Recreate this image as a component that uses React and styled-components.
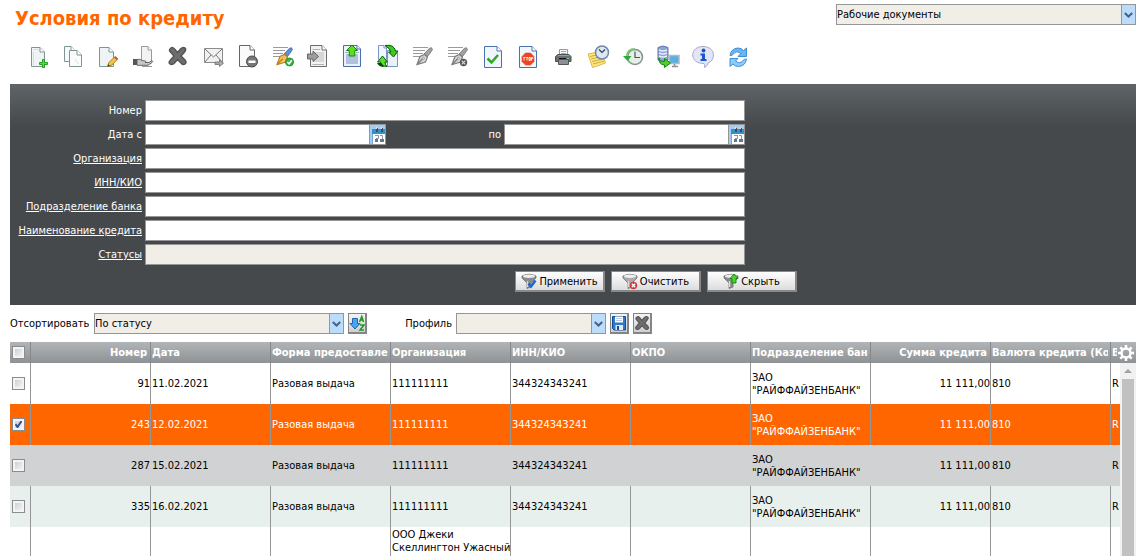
import React from "react";
import styled, { createGlobalStyle, css } from "styled-components";

const GlobalStyle = createGlobalStyle`
  * { box-sizing: border-box; }
  body {
    margin: 0;
    background: #fff;
    color: #000;
    overflow: hidden;
  }
  body, button, input, select {
    font-family: Tahoma, "DejaVu Sans Condensed", "DejaVu Sans", sans-serif;
    font-size: 11px;
    line-height: 13px;
  }
`;

const Page = styled.div`
  display: flex;
  flex-direction: column;
  height: 100vh;
  padding-left: 10px;
`;

const Header = styled.header`
  display: flex;
  justify-content: space-between;
  align-items: flex-start;
  padding: 4px 0 0 5px;
`;

const Title = styled.h1`
  margin: 0;
  color: #ff6600;
  font-size: 20px;
  line-height: 28px;
  font-weight: bold;
`;

const SelectFrame = styled.span`
  display: flex;
  width: ${(p) => p.$width};
  height: 21px;
  border: 1px solid #969696;
  background: #f1eee8;
  position: relative;
`;

const SelectInput = styled.select`
  appearance: none;
  flex: 1;
  min-width: 0;
  border: 0;
  padding: 0;
  margin: 0;
  background: transparent;
  color: #000;
  outline: none;
`;

const SelectArrow = styled.span`
  position: absolute;
  top: 0;
  right: 0;
  bottom: 0;
  width: 14px;
  display: flex;
  align-items: center;
  justify-content: center;
  border-left: 1px solid #969696;
  background: #bbdcfb;
  pointer-events: none;
`;

const Toolbar = styled.nav`
  display: flex;
  gap: 11px;
  padding: 13px 0 15px 17px;
`;

const ToolButton = styled.button`
  width: 24px;
  height: 24px;
  padding: 0;
  border: 0;
  background: none;
  svg { display: block; overflow: visible; }
`;

const FilterPanel = styled.form`
  padding: 16px 0 13px;
  background: linear-gradient(#5f6468 0, #45494c 42px);
  color: #fff;
`;

const Fields = styled.div`
  display: grid;
  grid-template-columns: 132px minmax(0, 600px);
  column-gap: 3px;
  row-gap: 3px;
  align-items: center;
`;

const labelText = css`
  color: #fff;
  justify-self: end;
  white-space: nowrap;
`;

const FieldLabel = styled.label`
  ${labelText}
`;

const FieldLink = styled.a`
  ${labelText}
  text-decoration: underline;
`;

const TextInput = styled.input`
  width: 100%;
  min-width: 0;
  height: 21px;
  padding: 0 2px;
  border: 1px solid #969696;
  border-radius: 0;
  background: ${(p) => (p.$muted ? "#f1eee8" : "#fff")};
  outline: none;
`;

const DateRange = styled.div`
  display: flex;
  align-items: center;
`;

const DateBox = styled.span`
  display: flex;
  width: 241px;
  height: 21px;
  border: 1px solid #969696;
  background: #fff;
`;

const DateInput = styled.input`
  flex: 1;
  min-width: 0;
  border: 0;
  padding: 0 2px;
  outline: none;
`;

const CalendarButton = styled.button`
  width: 16px;
  padding: 0;
  border: 0;
  border-left: 1px solid #969696;
  background: #a5cdf4;
  svg { display: block; }
`;

const RangeLabel = styled.label`
  flex: 1;
  padding-right: 3px;
  text-align: right;
`;

const FilterActions = styled.div`
  display: flex;
  gap: 6px;
  padding: 6px 0 0 505px;
`;

const ActionButton = styled.button`
  display: flex;
  align-items: center;
  justify-content: center;
  gap: 2px;
  width: 90px;
  height: 21px;
  padding: 0;
  border: 1px solid #898989;
  border-width: 1px 2px 2px 1px;
  background: linear-gradient(#fff, #dcdcdc);
  color: #000;
  white-space: nowrap;
`;

const SortBar = styled.div`
  display: flex;
  align-items: center;
  gap: 4px;
  padding: 8px 0;
`;

const BarLabel = styled.label`
  width: ${(p) => p.$width};
  text-align: ${(p) => p.$align || "left"};
  white-space: nowrap;
`;

const SmallButton = styled.button`
  width: 19px;
  height: 21px;
  padding: 0;
  border: 1px solid #858585;
  border-width: 1px 2px 2px 1px;
  background: linear-gradient(#f4f4f4, #cfcfcf);
  svg { display: block; }
`;

const GridArea = styled.div`
  position: relative;
  flex: 1;
  min-height: 0;
  overflow: hidden;
`;

const Table = styled.table`
  width: 100%;
  table-layout: fixed;
  border-collapse: separate;
  border-spacing: 0;
`;

const Col = styled.col`
  width: ${(p) => p.$width};
`;

const HeadRow = styled.tr`
  height: 21px;
  background: linear-gradient(#b1b5b8, #8e9295);
`;

const HeadCell = styled.th`
  height: 21px;
  padding: 0 ${(p) => (p.$right ? 3 : 2)}px 0 1px;
  border-right: 1px solid #85888a;
  color: #fff;
  text-align: ${(p) => (p.$right ? "right" : "left")};
  white-space: nowrap;
  &:first-child { padding-left: 2px; }
  &:last-child {
    border-right: 0;
    padding-right: 19px;
  }
`;

const Clip = styled.span`
  display: block;
  overflow: hidden;
`;

const rowStyles = {
  plain: css`background: #fff;`,
  selected: css`background: #ff6600; color: #fff;`,
  hover: css`background: #d1d2d4; --line: transparent;`,
  tinted: css`background: #e8f0ed;`,
};

const Row = styled.tr`
  --line: #969696;
  height: 41px;
  ${(p) => rowStyles[p.$kind]}
`;

const Cell = styled.td`
  padding: 1px 0 1px 1px;
  border-right: 1px solid var(--line);
  text-align: ${(p) => (p.$right ? "right" : "left")};
  vertical-align: ${(p) => (p.$top ? "top" : "middle")};
  overflow: hidden;
  white-space: pre-line;
  &:first-child { padding-left: 2px; }
  &:last-child { border-right: 0; }
`;

const Unbroken = styled.span`
  white-space: nowrap;
`;

const Check = styled.input`
  appearance: none;
  display: block;
  width: 13px;
  height: 13px;
  margin: 0;
  border: 1px solid #8a8d90;
  background: linear-gradient(135deg, #c3c8cf, #fafafa);
  box-shadow: inset 0 0 0 2px #f4f4f4;
  &:checked {
    background: url('data:image/svg+xml;utf8,<svg xmlns="http://www.w3.org/2000/svg" viewBox="0 0 11 11"><path d="M2.5 5.2L4.5 8L8.7 1.8" fill="none" stroke="%2334508f" stroke-width="2"/></svg>'),
      linear-gradient(135deg, #c3c8cf, #fafafa);
  }
`;

const GearButton = styled.button`
  position: absolute;
  top: 2px;
  right: 1px;
  width: 18px;
  height: 18px;
  padding: 0;
  border: 0;
  background: none;
  svg { display: block; }
`;

const Scrollbar = styled.div`
  position: absolute;
  top: 21px;
  right: 0;
  bottom: 0;
  width: 16px;
  display: flex;
  flex-direction: column;
  align-items: center;
  background: #f1f1f1;
`;

const ScrollUp = styled.span`
  height: 16px;
  display: flex;
  align-items: center;
`;

const ScrollThumb = styled.span`
  flex: 1;
  width: 12px;
  background: #c1c1c1;
`;

/* ---------- icons ---------- */

const Doc = ({ x, y, w, h, stroke = "#7f9494", fill = "#eef4f3", fold = 5 }) => (
  <g stroke={stroke} fill={fill}>
    <path d={`M${x + 0.5} ${y + 0.5}H${x + w - fold}L${x + w - 0.5} ${y + fold}V${y + h - 0.5}H${x + 0.5}Z`} />
    <path d={`M${x + w - fold} ${y + 0.5}V${y + fold}H${x + w - 0.5}`} fill="#fff" />
  </g>
);

const Lines = () => <path d="M1 2.5H16M1 5.5H13M1 8.5H11M1 11.5H9" stroke="#9a9a9a" />;

const Nib = ({ a, b, c, edge }) => (
  <g>
    <path d="M12 9L17.5 3.2Q19.5 2 20.5 4Q20.5 5 15.500 11.500Z" fill={c} stroke={edge} strokeWidth=".8" />
    <path d="M5 19.500L8 11.500L12.500 9.500L15.500 12L13.500 17Z" fill={a} stroke={b} strokeWidth="1.200" />
    <path d="M5.500 19L11 13.500" stroke={b} strokeWidth="1.200" />
    <circle cx="11.300" cy="13.200" r="1.100" fill="#fff" stroke={b} strokeWidth=".7" />
  </g>
);

const GreyCross = () => (
  <path
    d="M3.500 3.500Q5.500 1.500 7.500 4L10.500 7.500L13.500 4Q16 1.500 18 3Q19.500 4.500 17.500 7L14 11L18 15Q20 17.500 18 19Q16 20.500 14 18L10.500 14.500L7.500 18Q5 20.500 3 19Q1 17.500 3.500 15L7 11L3.500 7Q1.500 5 3.500 3.500Z"
    fill="#6e6e6e" stroke="#555" strokeWidth="1.500"
  />
);

const icons = {
  "Создать": (
    <>
      <Doc x={4} y={2} w={14} h={20} />
      <path d="M6.500 4.500H12M6.500 20V7" stroke="#d4dfdd" />
      <path d="M15.500 14.500H17.500V17.500H20.500V19.500H17.500V22.500H15.500V19.500H12.500V17.500H15.500Z" fill="#4fe03c" stroke="#1fa51d" />
    </>
  ),
  "Копировать": (
    <>
      <Doc x={2} y={1} w={12} h={16} fill="#f7fafa" />
      <Doc x={7} y={5} w={13} h={17} fill="#fbfdfd" />
      <path d="M13 14L16.500 19" stroke="#dde5e4" />
    </>
  ),
  "Изменить": (
    <>
      <Doc x={2} y={2} w={15} h={20} />
      <path d="M10.500 21.500L12 17.500L18 11.500L20.800 14L14.500 20.300Z" fill="#f6c544" stroke="#a9782b" />
      <path d="M17 12.500L18.500 11.200L21 13.500L19.500 15Z" fill="#d9534a" />
      <path d="M10.500 21.500L11.300 19.300L12.800 20.800Z" fill="#443322" />
    </>
  ),
  "Передать": (
    <>
      <Doc x={9} y={1} w={11} h={17} stroke="#9a9a9a" fill="#f3f3f3" fold={4} />
      <path d="M1 14H5V20H1Z" fill="#555" />
      <path d="M5 14.500Q8 13.500 10 15.500L13.500 16Q14.500 17 13 17.500H17L20 15.500Q21.500 16 20 17.500L16 20.300H5Z" fill="#c6c6c6" stroke="#5b5b5b" strokeWidth=".9" />
      <path d="M10 21.500H20" stroke="#999" />
    </>
  ),
  "Удалить": <GreyCross />,
  "Отправить": (
    <>
      <path d="M2.500 3.500H20.500V17.500H2.500Z" fill="#f1f1f1" stroke="#8c8c8c" />
      <path d="M3 4L11.500 12L20 4M3 17L9 10M20 17L14 10" fill="none" stroke="#777" />
      <path d="M13 17H17.500V14.500L21.500 18.200L17.500 21.500V19.500H13Z" fill="#aaa" stroke="#6d6d6d" strokeWidth=".8" />
    </>
  ),
  "Отозвать": (
    <>
      <Doc x={2} y={0} w={16} h={22} stroke="#666" fill="#fafafa" />
      <circle cx="15" cy="16.500" r="5.500" fill="#777" stroke="#4b4b4b" />
      <path d="M11.500 15.500H18.500V18H11.500Z" fill="#fff" />
    </>
  ),
  "Подписать": (
    <>
      <Lines />
      <Nib a="#f9cb63" b="#c07c1c" c="#5c8fd6" edge="#3d66a8" />
      <circle cx="17.500" cy="17" r="4" fill="#35b54a" stroke="#1c9432" />
      <path d="M15.300 17L17 18.800L19.800 15.300" fill="none" stroke="#fff" strokeWidth="1.500" />
    </>
  ),
  "Импорт": (
    <>
      <Doc x={3} y={0} w={17} h={22} stroke="#6c6c6c" fill="#f2f2f2" />
      <path d="M5.500 4.500H13M5.500 19.500H17" stroke="#b3b3b3" />
      <path d="M6 7H17V17H6Z" fill="#d6d6d6" />
      <path d="M.5 9H6V6L11.500 11.500L6 16.500V14H.5Z" fill="#9d9d9d" stroke="#666" />
    </>
  ),
  "Экспорт": (
    <>
      <Doc x={1} y={0} w={18} h={22} stroke="#4c6fab" fill="#eaf2fd" fold={4} />
      <path d="M4 9H16V19H4Z" fill="#b4c1dc" />
      <path d="M3 7.500H6M14 7.500H17" stroke="#9eb0cf" />
      <path d="M10 0L15.500 5.500H12.800V11H7.200V5.500H4.500Z" fill="#58e01e" stroke="#188311" />
    </>
  ),
  "Обмен": (
    <>
      <Doc x={1} y={0} w={9} h={15} stroke="#7694c4" fill="#f2f6fd" fold={3} />
      <Doc x={10} y={5} w={11} h={17} stroke="#7694c4" fill="#eaf1fc" fold={3} />
      <path d="M8 .5Q17 -1 18.500 6H21L16.500 12L11.500 7H14Q13 3.500 8 .5Z" fill="#3ccb17" stroke="#06580a" />
      <path d="M10 21.500Q3 21 3.500 17H.5L5.500 11L10.500 17H8Q8 19.500 10 21.500Z" fill="#55e422" stroke="#06580a" />
      <path d="M0 18Q2 22 7 22L4.500 18Z" fill="#07440b" />
    </>
  ),
  "Подпись": (
    <>
      <Lines />
      <Nib a="#d8d8d8" b="#7c7c7c" c="#a2a2a2" edge="#6c6c6c" />
    </>
  ),
  "Снять подпись": (
    <>
      <Lines />
      <Nib a="#d8d8d8" b="#7c7c7c" c="#a2a2a2" edge="#6c6c6c" />
      <circle cx="16.500" cy="17.500" r="3.700" fill="#555" />
      <path d="M14.700 15.700L18.300 19.300M18.300 15.700L14.700 19.300" stroke="#ddd" strokeWidth="1.100" />
    </>
  ),
  "Проверить": (
    <>
      <Doc x={2} y={1} w={18} h={22} stroke="#4b72a9" fill="#eff6fe" />
      <path d="M5.500 13.500L9.500 17.500L16 10" fill="none" stroke="#2eaa20" strokeWidth="2.500" />
    </>
  ),
  "Остановить": (
    <>
      <Doc x={2} y={1} w={18} h={22} stroke="#4b72a9" fill="#eff6fe" />
      <path d="M8.500 8H13.500L17 11.500V16.500L13.500 20H8.500L5 16.500V11.500Z" fill="#f0431f" stroke="#d9482d" strokeWidth=".6" />
      <path d="M6.500 12.500H8.500M7 12.500V15.500M9.500 12.500H11M10 12.500V15.500M12 12.500H13.300V15.500H12ZM14.500 15.500V12.500H15.800V14" fill="none" stroke="#fff" strokeWidth=".9" />
    </>
  ),
  "Печать": (
    <>
      <path d="M7.500 4.500H15.500V11H7.500Z" fill="#f5f5f5" stroke="#999" />
      <path d="M9 6.500H14M9 8.500H14" stroke="#aaa" />
      <path d="M3.500 11.500L6 9.500H17L19 11.500V16.500H3.500Z" fill="#6a7075" stroke="#4b5053" />
      <path d="M6 10.500H17" stroke="#98a0a5" />
      <path d="M6.500 14.500H16.500V19.500H6.500Z" fill="#8b9196" stroke="#555" />
      <path d="M7 13.500H14" stroke="#111" />
      <path d="M15 13.500H17" stroke="#62db63" />
    </>
  ),
  "Отложить": (
    <>
      <path d="M1 9L14 6.500L18.500 18L5.500 22.500Z" fill="#fce781" stroke="#e0b846" />
      <path d="M3 11.500L14 9M4 14L15 11.500M5 16.500L16 14M6 19L17 16" stroke="#d1a63a" />
      <circle cx="15" cy="7.500" r="6.500" fill="#dbe7f5" stroke="#7187a6" strokeWidth="1.500" />
      <path d="M12 4.500L15 7.500L18 4.500" fill="none" stroke="#333f52" strokeWidth="1.200" />
    </>
  ),
  "История": (
    <>
      <circle cx="13" cy="12" r="7.500" fill="#e7eeea" stroke="#83918a" strokeWidth="1.500" />
      <path d="M13 6.500V12.500H18" fill="none" stroke="#4d5752" strokeWidth="1.200" />
      <path d="M13 4Q5 4 5 11.500" fill="none" stroke="#7cc47c" strokeWidth="2" />
      <path d="M1 11L9.500 11L5.500 16Z" fill="#2da737" />
      <path d="M6 16L9 18.500" stroke="#6fc36f" strokeWidth="1.500" />
    </>
  ),
  "Загрузить": (
    <>
      <path d="M1 2.500Q6 -.5 11 2.500V15Q6 17.500 1 15Z" fill="#8ea5d2" stroke="#5d76b0" />
      <path d="M2 5Q6 7 10 5M2 8Q6 10 10 8M2 11Q6 13 10 11" fill="none" stroke="#e6edfa" strokeWidth="1.500" />
      <path d="M12.500 10.500H22V18.500H12.500Z" fill="#55b0e8" stroke="#b1b9c1" strokeWidth="1.500" />
      <path d="M15 21.500H21M17.500 19V21" stroke="#8a9098" strokeWidth="1.500" />
      <path d="M2 13Q2.500 17 7.500 16.500V13.500L13.500 18L7.500 22.500V20Q1.500 19.500 2 13Z" fill="#4ed129" stroke="#168319" />
    </>
  ),
  "Информация": (
    <>
      <path d="M11 1.500C17 1.500 21.500 5 21.500 10C21.500 14 19 17 16 18Q16 20.500 12.500 22.500Q13 20 12 18.500C5 18.500 .7 15 .7 10C.7 5 5 1.500 11 1.500Z" fill="#e4e6f7" stroke="#a8a8c8" />
      <circle cx="11.500" cy="5.500" r="1.900" fill="#1558c9" />
      <path d="M8.500 8.500H13V14H14.500V16H8.500V14H10V10.500H8.500Z" fill="#1558c9" />
    </>
  ),
  "Обновить": (
    <>
      <path d="M3 10.500Q4 3.500 11 3Q14.500 3 16.500 5.500L19.500 3V11.500H11L13.800 8.500Q9 5 6.500 9Q5.500 10.500 3 10.500Z" fill="#6ab5f1" stroke="#3f8fd6" />
      <path d="M19.500 14Q18.500 21 11.500 21.500Q8 21.500 6 19L3 21.500V13.500H11L8.500 16Q13 19.500 16 15.500Q17 14 19.500 14Z" fill="#8dccf8" stroke="#3f8fd6" />
    </>
  ),
};

const Chevron = () => (
  <svg width="9" height="6" viewBox="0 0 9 6">
    <path d="M.8 1L4.500 4.500L8.200 1" fill="none" stroke="#47618a" strokeWidth="2" />
  </svg>
);

const CalendarIcon = () => (
  <svg width="15" height="19" viewBox="0 0 15 19">
    <path d="M2 4H15V9H2Z" fill="#2f93c6" />
    <path d="M2 9H3V19H2Z" fill="#79a5cf" />
    <path d="M3 9H15V19H3Z" fill="#fff" />
    <path d="M6 3H8V7H6ZM11 3H13V7H11Z" fill="#4a4560" />
    <path d="M6 2H7V4H6ZM11 2H12V4H11Z" fill="#dfe6ee" />
    <path d="M5 10.500H8M8.500 10V13.500H6M10 10.500H12.500V17" fill="none" stroke="#8b95ac" />
    <path d="M5 14H8V17H5ZM10 14H14V17H10Z" fill="#6b7280" />
  </svg>
);

const FunnelIcon = ({ kind }) => (
  <svg width="16" height="17" viewBox="0 0 16 17">
    <path d="M1 3Q8 -.5 15 3V5L10 10V14L6 15.500V10L1 5Z" fill={kind === "clear" ? "#aaa" : "#8b8b8b"} stroke="#6e6e6e" strokeWidth=".8" />
    <ellipse cx="8" cy="3.300" rx="6" ry="1.700" fill="#eee" />
    <path d="M6.500 8V14" stroke="#ddd" strokeWidth="1.300" />
    {kind === "apply" && <path d="M7.500 10.500L10 13.500L14.500 7.500" fill="none" stroke="#1c67d3" strokeWidth="2.600" />}
    {kind === "clear" && (
      <>
        <circle cx="11.500" cy="12.500" r="3.700" fill="#d5373b" />
        <path d="M9.800 10.800L13.200 14.200M13.200 10.800L9.800 14.200" stroke="#fff" strokeWidth="1.300" />
      </>
    )}
    {kind === "hide" && <path d="M11 1L15 5.500H13V10H9V5.500H7Z" fill="#4fd02f" stroke="#138313" strokeWidth=".9" />}
  </svg>
);

const SortIcon = () => (
  <svg width="16" height="18" viewBox="0 0 16 18">
    <path d="M3.500 4.500H8.500V9.500H11L6 15L1 9.500H3.500Z" fill="#4ea3ee" stroke="#1b66b5" />
    <path d="M10.500 8L12.800 2.500L14.500 8M11 6H14.500M11 11H15L11 16H15" fill="none" stroke="#1c9a27" strokeWidth="1.500" />
  </svg>
);

const SaveIcon = () => (
  <svg width="16" height="18" viewBox="0 0 16 18">
    <path d="M1.500 2.500H14.500V16H3L1.500 14.500Z" fill="#2f78cb" stroke="#174c92" />
    <path d="M4 2.500H12V8.500H4Z" fill="#fff" />
    <path d="M5 4.500H11M5 6.500H11" stroke="#bbcadd" />
    <path d="M4.500 11H12V16H4.500Z" fill="#e3eaf3" />
    <path d="M6 12H8V16H6Z" fill="#174c92" />
  </svg>
);

const GearIcon = () => (
  <svg width="18" height="18" viewBox="0 0 18 18">
    <g stroke="#fff">
      <circle cx="9" cy="9" r="4.500" fill="none" strokeWidth="2.500" />
      <path d="M9 1V4M9 14V17M1 9H4M14 9H17M3.300 3.300L5.500 5.500M12.500 12.500L14.700 14.700M14.700 3.300L12.500 5.500M5.500 12.500L3.300 14.700" strokeWidth="2.500" />
    </g>
  </svg>
);

/* ---------- parts ---------- */

const Dropdown = ({ id, width, options, label }) => (
  <SelectFrame $width={width}>
    <SelectInput id={id} aria-label={label}>
      {options.map((o) => <option key={o}>{o}</option>)}
    </SelectInput>
    <SelectArrow><Chevron /></SelectArrow>
  </SelectFrame>
);

const DateField = ({ id }) => (
  <DateBox>
    <DateInput id={id} type="text" />
    <CalendarButton type="button" aria-label="Календарь"><CalendarIcon /></CalendarButton>
  </DateBox>
);

const LinkedField = ({ id, text, muted }) => (
  <>
    <FieldLink id={`${id}-label`} href="#">{text}</FieldLink>
    <TextInput aria-labelledby={`${id}-label`} type="text" $muted={muted} readOnly={muted} />
  </>
);

const columns = [
  { title: "Номер", right: true },
  { title: "Дата" },
  { title: "Форма предоставления" },
  { title: "Организация" },
  { title: "ИНН/КИО" },
  { title: "ОКПО" },
  { title: "Подразделение банка" },
  { title: "Сумма кредита", right: true },
  { title: "Валюта кредита (Код)" },
  { title: "В" },
];

const record = (number, date) => [
  number, date, "Разовая выдача", "111111111", "344324343241", "",
  "ЗАО\n\"РАЙФФАЙЗЕНБАНК\"", "11 111,00", "810", "R",
];

const rows = [
  { kind: "plain", cells: record("91", "11.02.2021") },
  { kind: "selected", cells: record("243", "12.02.2021") },
  { kind: "hover", cells: record("287", "15.02.2021") },
  { kind: "tinted", cells: record("335", "16.02.2021") },
];

export default function App() {
  return (
    <>
      <GlobalStyle />
      <Page>
        <Header>
          <Title>Условия по кредиту</Title>
          <Dropdown width="300px" options={["Рабочие документы"]} label="Раздел" />
        </Header>

        <Toolbar>
          {Object.entries(icons).map(([name, drawing]) => (
            <ToolButton key={name} type="button" aria-label={name}>
              <svg width="24" height="24" viewBox="0 0 24 24" fill="none">{drawing}</svg>
            </ToolButton>
          ))}
        </Toolbar>

        <FilterPanel onSubmit={(e) => e.preventDefault()}>
          <Fields>
            <FieldLabel htmlFor="number">Номер</FieldLabel>
            <TextInput id="number" type="text" />
            <FieldLabel htmlFor="date-from">Дата с</FieldLabel>
            <DateRange>
              <DateField id="date-from" />
              <RangeLabel htmlFor="date-to">по</RangeLabel>
              <DateField id="date-to" />
            </DateRange>
            <LinkedField id="org" text="Организация" />
            <LinkedField id="inn" text="ИНН/КИО" />
            <LinkedField id="branch" text="Подразделение банка" />
            <LinkedField id="credit" text="Наименование кредита" />
            <LinkedField id="status" text="Статусы" muted />
          </Fields>
          <FilterActions>
            <ActionButton type="submit"><FunnelIcon kind="apply" />Применить</ActionButton>
            <ActionButton type="reset"><FunnelIcon kind="clear" />Очистить</ActionButton>
            <ActionButton type="button"><FunnelIcon kind="hide" />Скрыть</ActionButton>
          </FilterActions>
        </FilterPanel>

        <SortBar>
          <BarLabel htmlFor="sort" $width="80px">Отсортировать</BarLabel>
          <Dropdown id="sort" width="250px" options={["По статусу"]} />
          <SmallButton type="button" aria-label="Сортировать"><SortIcon /></SmallButton>
          <BarLabel htmlFor="profile" $width="81px" $align="right">Профиль</BarLabel>
          <Dropdown id="profile" width="150px" options={[""]} />
          <SmallButton type="button" aria-label="Сохранить профиль"><SaveIcon /></SmallButton>
          <SmallButton type="button" aria-label="Удалить профиль">
            <svg width="16" height="18" viewBox="0 0 21 22"><GreyCross /></svg>
          </SmallButton>
        </SortBar>

        <GridArea>
          <Table>
            <colgroup>
              <Col $width="21px" />
              {columns.map((c, i) => <Col key={c.title} $width={i < columns.length - 1 ? "120px" : "auto"} />)}
            </colgroup>
            <thead>
              <HeadRow>
                <HeadCell><Check type="checkbox" aria-label="Выбрать все" /></HeadCell>
                {columns.map((c) => (
                  <HeadCell key={c.title} $right={c.right}><Clip>{c.title}</Clip></HeadCell>
                ))}
              </HeadRow>
            </thead>
            <tbody>
              {rows.map((r) => (
                <Row key={r.cells[0]} $kind={r.kind}>
                  <Cell><Check type="checkbox" aria-label={r.cells[0]} defaultChecked={r.kind === "selected"} /></Cell>
                  {r.cells.map((text, i) => <Cell key={i} $right={columns[i].right}>{text}</Cell>)}
                </Row>
              ))}
              <Row $kind="plain">
                <Cell />
                {columns.map((c) => (
                  <Cell key={c.title} $top>
                    {c.title === "Организация" && <>ООО Джеки <Unbroken>Скеллингтон Ужасный</Unbroken></>}
                  </Cell>
                ))}
              </Row>
            </tbody>
          </Table>
          <GearButton type="button" aria-label="Настройки"><GearIcon /></GearButton>
          <Scrollbar>
            <ScrollUp>
              <svg width="8" height="4" viewBox="0 0 8 4"><path d="M4 0L8 4H0Z" fill="#a0a0a0" /></svg>
            </ScrollUp>
            <ScrollThumb />
          </Scrollbar>
        </GridArea>
      </Page>
    </>
  );
}
